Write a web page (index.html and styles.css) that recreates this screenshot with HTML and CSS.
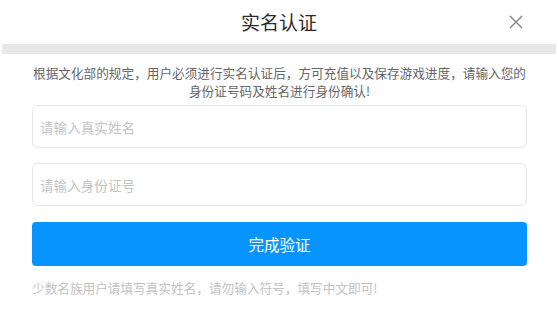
FILE: index.html
```html
<!DOCTYPE html>
<html lang="zh-CN">
<head>
  <meta charset="UTF-8" />
  <meta name="viewport" content="width=device-width, initial-scale=1.0"/>
  <title>实名认证</title>
  <link rel="stylesheet" href="styles.css">
</head>
<body>

  <div class="header">
    <span></span>
    <h2>实名认证</h2>
    <button class="close" aria-label="关闭">
      <svg width="14" height="14" viewBox="0 0 14 14">
        <path d="M1 1 L13 13 M13 1 L1 13" stroke="#8a8a8a" stroke-width="1.5" fill="none"/>
      </svg>
    </button>
  </div>
  <div class="divider"></div>

  <div class="content">
    <p class="notice">根据文化部的规定，用户必须进行实名认证后，方可充值以及保存游戏进度，请输入您的<br>身份证号码及姓名进行身份确认!</p>
    <input class="field" placeholder="请输入真实姓名" />
    <input class="field" placeholder="请输入身份证号" />
    <button class="submit">完成验证</button>
    <p class="tip">少数名族用户请填写真实姓名，请勿输入符号，填写中文即可!</p>
  </div>

</body>
</html>
```

FILE: styles.css
```css
body {
  margin: 0;
  background: #fff;
  font-family: "Noto Sans CJK SC", "Noto Sans", sans-serif;
  color: #333;
}
.header {
  display: grid;
  grid-template-columns: 1fr auto 1fr;
  align-items: center;
  height: 44px;
}
.header h2 {
  margin: 0;
  font-size: 19px;
  font-weight: normal;
  line-height: 24px;
  color: #2a2a2a;
}
.close {
  justify-self: end;
  margin-right: 35px;
  padding: 0;
  border: none;
  background: none;
  width: 14px;
  height: 14px;
  display: flex;
}
.divider {
  height: 10px;
  margin: 0 2px;
  background: #e8e8e8;
}
.content {
  padding: 0 31px 0 32px;
  display: flex;
  flex-direction: column;
}
.notice {
  margin: 10px 0 5px;
  font-size: 12.65px;
  line-height: 18px;
  text-align: center;
  color: #666;
  white-space: nowrap;
}
.field {
  box-sizing: border-box;
  height: 43px;
  margin: 0 0 15px;
  padding: 0 7px;
  border: 1px solid #e6e6e6;
  border-radius: 6px;
  font-family: inherit;
  font-size: 13.6px;
  outline: none;
}
.field::placeholder {
  color: #c4c4c4;
}
.submit {
  height: 44px;
  margin-top: 1px;
  border: none;
  border-radius: 4px;
  background: #0894ff;
  color: #fff;
  font-family: inherit;
  font-size: 15.5px;
  cursor: pointer;
}
.tip {
  margin: 13px 0 0;
  font-size: 12.65px;
  line-height: 18px;
  color: #c2c2c2;
}
```
